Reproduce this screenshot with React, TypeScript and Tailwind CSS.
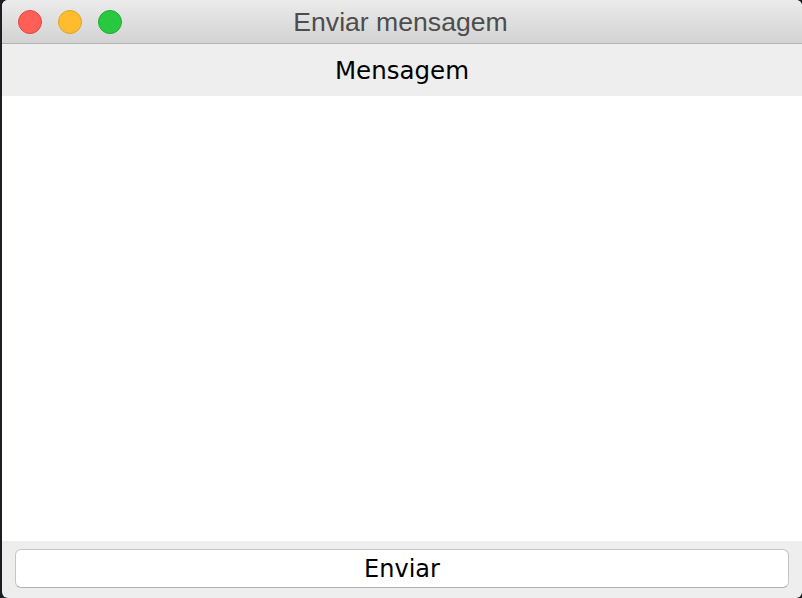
import React from 'react';

const TrafficLight = ({ fill, stroke }: { fill: string; stroke: string }) => (
  <span className={`block w-[24px] h-[24px] rounded-full border ${fill} ${stroke}`} />
);

const App = () => {
  return (
    <div className="w-[802px] h-[598px] bg-[#1b1e22] flex">
      <div className="ml-[2px] flex-1 flex flex-col rounded-[6px] overflow-hidden bg-[#eeeeee]">
        {/* Title bar */}
        <div className="h-[44px] grid grid-cols-[1fr_auto_1fr] items-center border-b border-[#b3b3b3] bg-gradient-to-b from-[#ebebeb] to-[#d3d3d3]">
          <div className="flex items-center gap-[16px] pl-[16px]">
            <TrafficLight fill="bg-[#ff5f57]" stroke="border-[#e2463f]" />
            <TrafficLight fill="bg-[#febc2e]" stroke="border-[#e1a325]" />
            <TrafficLight fill="bg-[#28c840]" stroke="border-[#1dad2b]" />
          </div>
          <div className="text-[26.6px] leading-none text-[#4d4d4d] pr-[3px] pt-[1px]" style={{ fontFamily: '"Liberation Sans", Arial, sans-serif' }}>
            Enviar mensagem
          </div>
          <div />
        </div>

        {/* Label */}
        <div className="h-[52px] flex items-center justify-center pt-[3px] text-[24.5px] text-black" style={{ fontFamily: '"DejaVu Sans", sans-serif' }}>
          Mensagem
        </div>

        {/* Message area */}
        <div className="flex-1 bg-white" />

        {/* Footer */}
        <div className="h-[57px] px-[13px] pt-[8px]">
          <button
            type="button"
            className="w-full h-[39px] rounded-[6px] bg-white border border-[#c6c6c6] border-b-[#b0b0b0] pt-[1px] text-[24px] text-black"
            style={{ fontFamily: '"DejaVu Sans", sans-serif' }}
          >
            Enviar
          </button>
        </div>
      </div>
    </div>
  );
};

export default App;
